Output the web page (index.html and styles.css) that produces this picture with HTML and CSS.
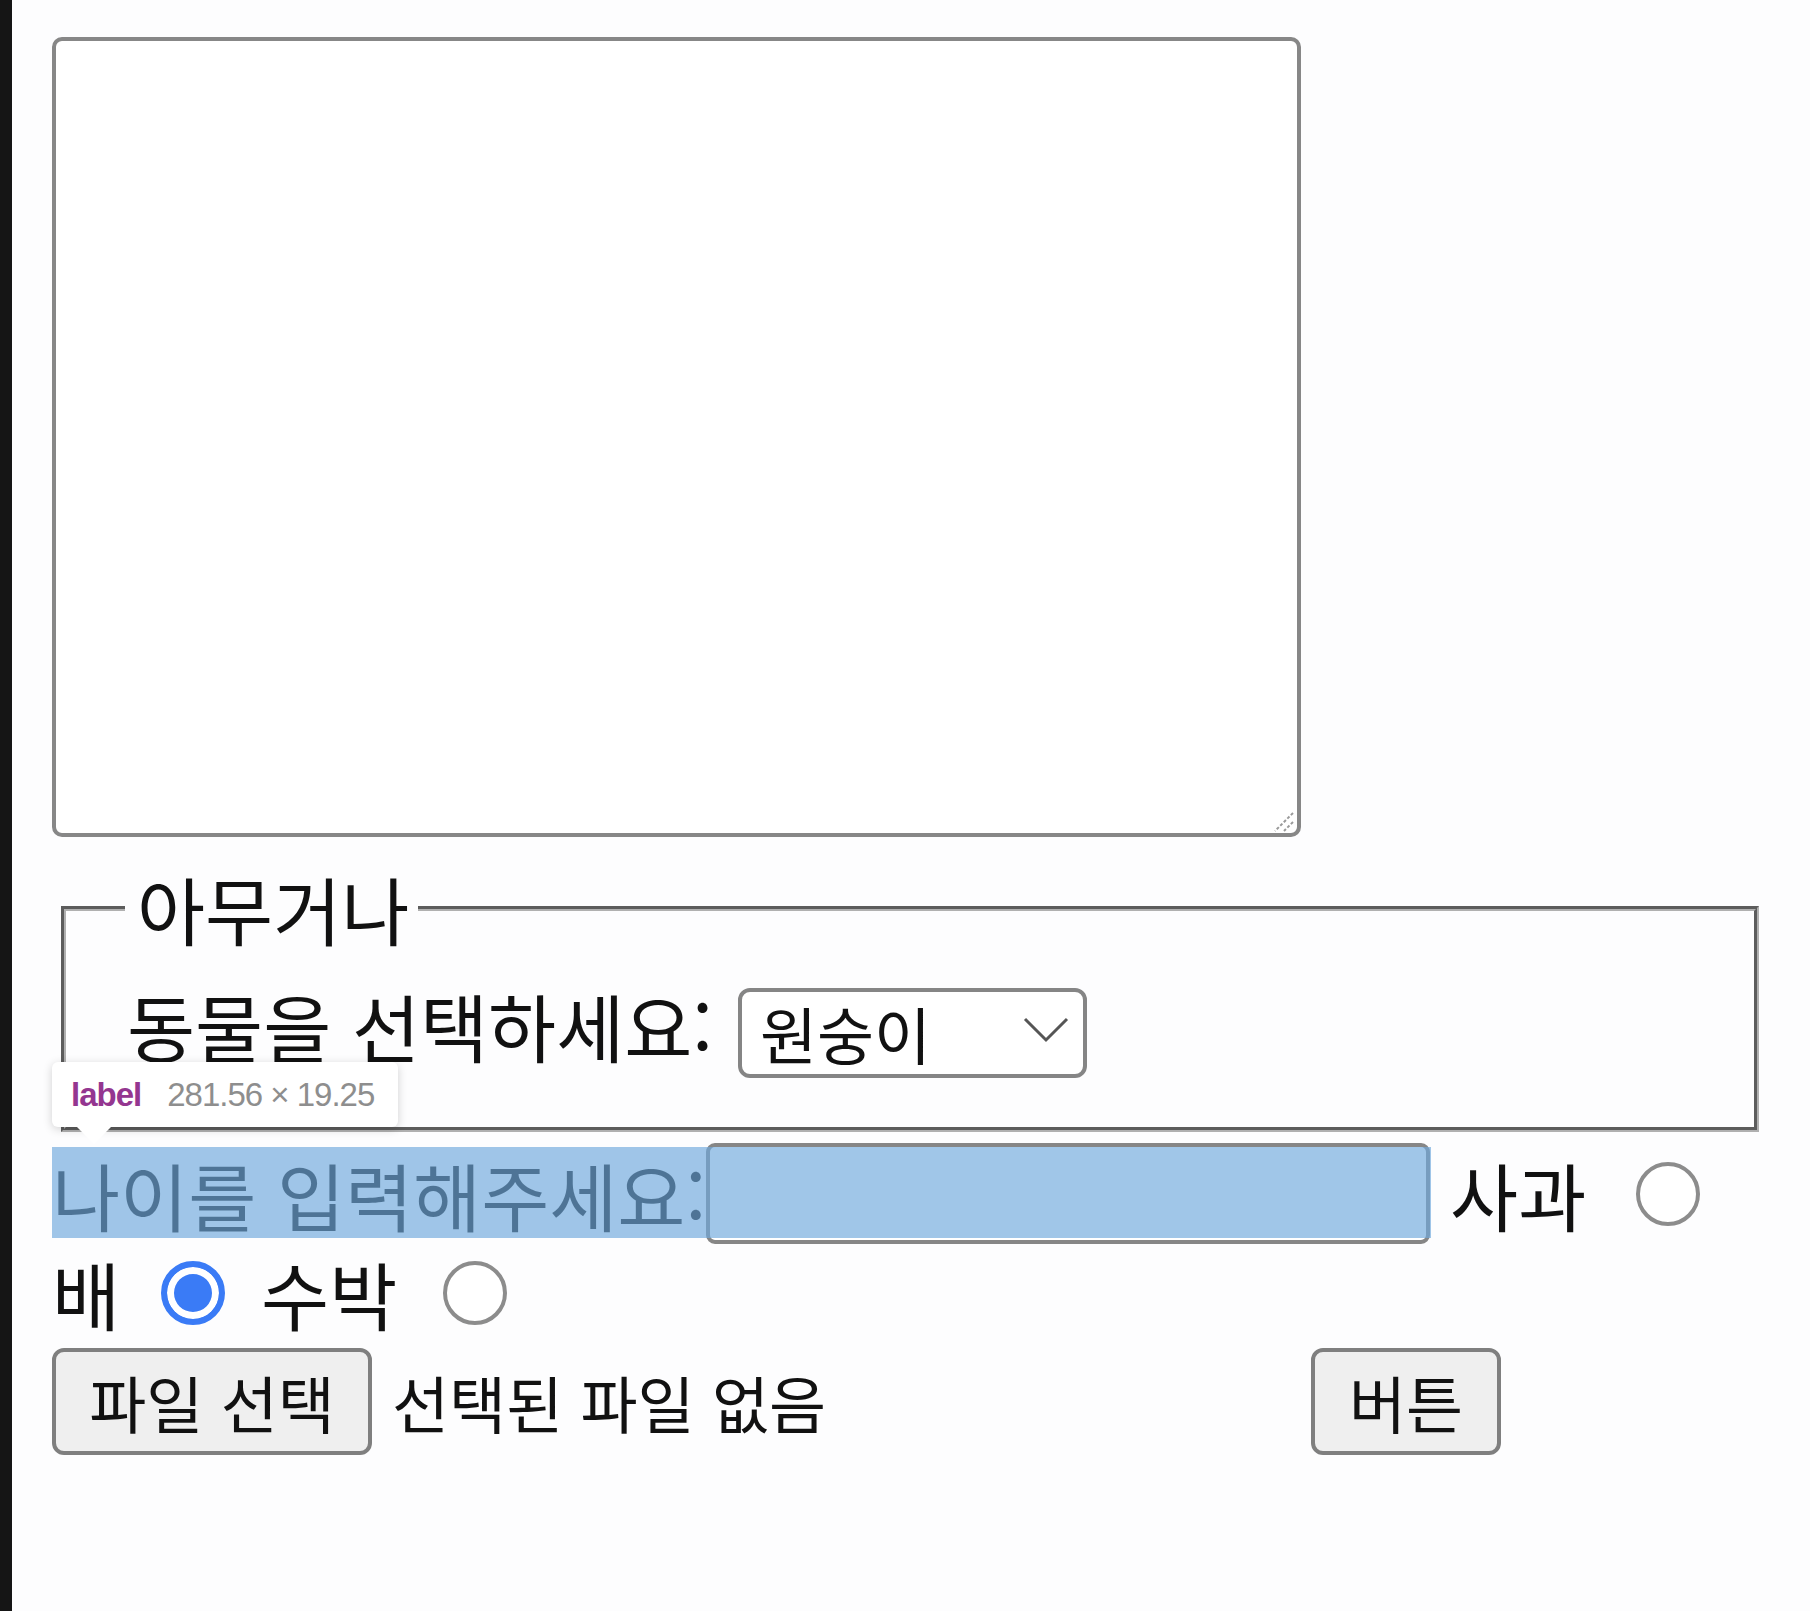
FILE: index.html
```html
<!DOCTYPE html>
<html lang="ko">
<head>
    <meta charset="UTF-8">
    <meta name="viewport" content="width=device-width, initial-scale=1.0">
    <title>폼 연습</title>
    <link rel="stylesheet" href="styles.css">
</head>
<body>
    <div class="edge"></div>

    <div class="content">
        <div class="memo">
            <textarea class="memo-box"></textarea>
            <svg class="grip" width="24" height="24" viewBox="0 0 24 24">
                <line x1="21" y1="3" x2="3" y2="21" stroke="#9a9a9a" stroke-width="2" stroke-dasharray="3 2"/>
                <line x1="21" y1="12" x2="12" y2="21" stroke="#9a9a9a" stroke-width="2" stroke-dasharray="3 2"/>
            </svg>
        </div>

        <fieldset class="group">
            <legend>아무거나</legend>
            <div class="group-row">
                <label for="animal">동물을 선택하세요:</label>
                <div class="select-wrap">
                    <select id="animal" class="select">
                        <option>원숭이</option>
                        <option>고양이</option>
                        <option>강아지</option>
                    </select>
                    <svg class="chevron" width="48" height="28" viewBox="0 0 48 28">
                        <polyline points="3,4 24,25 45,4" fill="none" stroke="#555" stroke-width="3"/>
                    </svg>
                </div>
            </div>
        </fieldset>

        <div class="line line-age">
            <label class="age-label">나이를 입력해주세요:<input type="text" class="age-input"></label>
            <span class="opt">사과</span>
            <input type="radio" name="fruit" class="radio">

            <div class="highlight"></div>
            <div class="tip">
                <span class="tip-tag">label</span>
                <span class="tip-size">281.56 × 19.25</span>
            </div>
        </div>

        <div class="line line-fruit">
            <span class="opt">배</span>
            <input type="radio" name="fruit" class="radio" checked>
            <span class="opt">수박</span>
            <input type="radio" name="fruit" class="radio">
        </div>

        <div class="line line-file">
            <div class="file-field">
                <button class="btn file-btn">파일 선택</button>
                <span class="file-name">선택된 파일 없음</span>
            </div>
            <button class="btn plain-btn">버튼</button>
        </div>
    </div>
</body>
</html>
```

FILE: styles.css
```css
body {
    margin: 0;
    display: flex;
    min-height: 100vh;
    background-color: #fdfdfe;
    font-family: "Noto Sans CJK KR", sans-serif;
    font-size: 74px;
    line-height: 90px;
    color: #111;
}

.edge {
    width: 12px;
    flex-shrink: 0;
    background-color: #151515;
}

.content {
    padding: 37px 0 0 40px;
}

/* 메모 영역 */
.memo {
    position: relative;
    width: 1249px;
    height: 800px;
}

.memo-box {
    display: block;
    box-sizing: border-box;
    width: 100%;
    height: 100%;
    margin: 0;
    border: 4px solid #878787;
    border-radius: 10px;
    background-color: #fff;
    resize: none;
}

.grip {
    position: absolute;
    right: 5px;
    bottom: 3px;
}

/* 필드셋 */
.group {
    box-sizing: border-box;
    width: 1698px;
    margin: 26px 0 0 9px;
    padding: 34px 55px 50px;
    border: 5px groove #b0b0b0;
}

.group legend {
    margin-left: 4px;
    padding: 0 9px 0 12px;
    line-height: 90px;
}

.group-row {
    display: flex;
    align-items: center;
    height: 90px;
    padding-left: 6px;
}

.group-row label {
    position: relative;
    top: -7px;
}

.select-wrap {
    position: relative;
    top: -2px;
    margin-left: 25px;
}

.select {
    appearance: none;
    box-sizing: border-box;
    width: 349px;
    height: 90px;
    margin: 0;
    padding: 0 0 0 18px;
    border: 4px solid #858585;
    border-radius: 12px;
    background-color: #fff;
    font-family: inherit;
    font-size: 62px;
    line-height: 80px;
    color: #111;
}

.chevron {
    position: absolute;
    left: 284px;
    top: 32px;
}

/* 줄 */
.line {
    display: flex;
    align-items: center;
}

.line-age {
    position: relative;
    height: 101px;
    margin-top: 11px;
}

.age-label {
    display: flex;
    align-items: center;
    line-height: 91px;
}

.age-input {
    box-sizing: border-box;
    width: 724px;
    height: 101px;
    margin: 0;
    border: 4px solid #868686;
    border-radius: 9px;
    background-color: #fff;
}

.line-age .opt {
    margin-left: 20px;
}

.line-fruit {
    height: 90px;
    margin-top: 4px;
}

.radio {
    appearance: none;
    box-sizing: border-box;
    width: 64px;
    height: 64px;
    margin: 0 36px 0 50px;
    border: 4px solid #8c8c8c;
    border-radius: 50%;
    background-color: #fff;
}

.radio:checked {
    border: 6px solid #3a7bf6;
    background-color: #3a7bf6;
    box-shadow: inset 0 0 0 7px #fff;
}

.line-fruit .radio:first-of-type {
    margin-left: 41px;
}

.line-fruit .radio:last-of-type {
    margin-left: 46px;
}

.line-file {
    margin-top: 10px;
}

.file-field {
    display: flex;
    align-items: center;
    width: 1243px;
    font-size: 62px;
}

.btn {
    box-sizing: border-box;
    height: 107px;
    margin: 0;
    border: 4px solid #7f7f7f;
    border-radius: 12px;
    background-color: #efefef;
    font-family: inherit;
    font-size: 62px;
    color: #111;
}

.file-btn {
    width: 320px;
}

.file-name {
    margin-left: 20px;
}

.plain-btn {
    width: 190px;
    margin-left: 16px;
}

/* 개발자 도구 표시 */
.highlight {
    position: absolute;
    left: 0;
    top: 4px;
    width: 1379px;
    height: 91px;
    background-color: rgba(111, 168, 220, 0.66);
}

.tip {
    position: absolute;
    left: 0;
    top: -81px;
    box-sizing: border-box;
    width: 346px;
    height: 65px;
    padding: 0 0 0 19px;
    display: flex;
    align-items: center;
    gap: 26px;
    background-color: #fff;
    border-radius: 6px;
    box-shadow: 0 2px 10px rgba(0, 0, 0, 0.18);
    font-family: "Liberation Sans", Arial, sans-serif;
    font-size: 33px;
    line-height: 40px;
    letter-spacing: -1px;
}

.tip::after {
    content: "";
    position: absolute;
    left: 24px;
    top: 64px;
    border-left: 18px solid transparent;
    border-right: 18px solid transparent;
    border-top: 18px solid #fff;
}

.tip-tag {
    font-weight: bold;
    color: #943690;
}

.tip-size {
    color: #8e8e8e;
}
```
